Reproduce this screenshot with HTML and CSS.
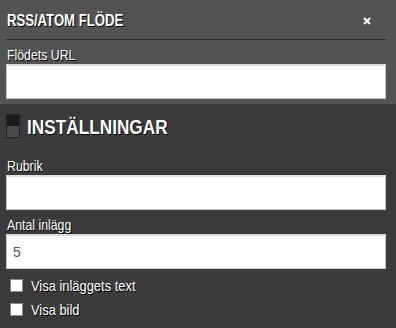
FILE: index.html
```html
<!DOCTYPE html>
<html lang="sv">
<head>
<meta charset="utf-8">
<title>RSS/ATOM Flöde</title>
<link rel="stylesheet" href="styles.css">
</head>
<body>
<div class="panel">
  <div class="top">
    <div class="header">
      <h1 class="title"><span class="nw">RSS/ATOM FLÖDE</span></h1>
      <span class="close"><svg width="8" height="8" viewBox="0 0 8 8"><path d="M1 1L7 7M7 1L1 7" stroke="#fff" stroke-width="2"/></svg></span>
    </div>
    <label class="label"><span class="nw">Flödets URL</span></label>
    <input class="field" type="text">
  </div>
  <div class="settings">
    <div class="section-head">
      <span class="sec-icon"></span>
      <h2 class="sec-title"><span class="nw">INSTÄLLNINGAR</span></h2>
    </div>
    <label class="label"><span class="nw">Rubrik</span></label>
    <input class="field" type="text">
    <label class="label"><span class="nw">Antal inlägg</span></label>
    <input class="field" type="text" value="5">
    <label class="check"><span class="box"></span><span class="nw wide">Visa inläggets text</span></label>
    <label class="check"><span class="box"></span><span class="nw wide">Visa bild</span></label>
  </div>
</div>
</body>
</html>
```

FILE: styles.css
```css
html, body {
  margin: 0;
  padding: 0;
  background: #3a3b3a;
}
.panel {
  width: 396px;
  height: 328px;
  font-family: "Liberation Sans", Arial, sans-serif;
  color: #fff;
}
.nw {
  display: inline-block;
  white-space: nowrap;
  transform: scaleX(0.82);
  transform-origin: left center;
}
.nw.wide {
  transform: scaleX(0.86);
}
.top {
  background: #535353;
  padding: 0 10px 5px 6px;
  display: flex;
  flex-direction: column;
}
.header {
  height: 40px;
  border-bottom: 1px solid #2e2e2e;
  display: flex;
  align-items: center;
  justify-content: space-between;
  box-sizing: border-box;
}
.title {
  margin: 0 0 0 1px;
  font-size: 16px;
  font-weight: bold;
  line-height: 18px;
  padding-top: 3px;
  text-shadow: 1px 1px 0 #000;
}
.close {
  display: flex;
  margin-right: 15px;
  padding-top: 3px;
}
.label {
  display: block;
  font-size: 15px;
  line-height: 17px;
  margin: 6px 0 1px 1px;
  text-shadow: 1px 1px 0 #000;
}
.field {
  display: block;
  box-sizing: border-box;
  width: 380px;
  height: 35px;
  margin: 0;
  border: 1px solid #c8c8c8;
  border-top: 2px solid #dcdcdc;
  background: #fff;
  padding: 0 6px;
  font-family: "Liberation Sans", Arial, sans-serif;
  font-size: 14px;
  color: #555;
  outline: none;
}
.settings {
  padding: 10px 10px 0 6px;
  display: flex;
  flex-direction: column;
}
.section-head {
  display: flex;
  align-items: center;
  height: 24px;
  margin-bottom: 19px;
}
.sec-icon {
  width: 14px;
  height: 24px;
  box-sizing: border-box;
  border: 1px solid #222;
  background: linear-gradient(#1b1b1b 0 50%, #4a4a4a 50% 100%);
  margin-right: 7px;
}
.sec-title {
  margin: 0;
  font-size: 21px;
  line-height: 24px;
  font-weight: bold;
  text-shadow: 1px 1px 0 #000;
  padding-top: 2px;
}
.settings .label {
  margin-top: 0;
}
.settings .field + .label {
  margin-top: 6px;
}
.check {
  display: flex;
  align-items: center;
  gap: 8px;
  font-size: 15px;
  line-height: 17px;
  padding-left: 4px;
  text-shadow: 1px 1px 0 #000;
  height: 24px;
}
.settings .field + .check {
  margin-top: 4px;
}
.box {
  width: 13px;
  height: 13px;
  box-sizing: border-box;
  background: #fff;
  border: 1px solid #888;
}
```
